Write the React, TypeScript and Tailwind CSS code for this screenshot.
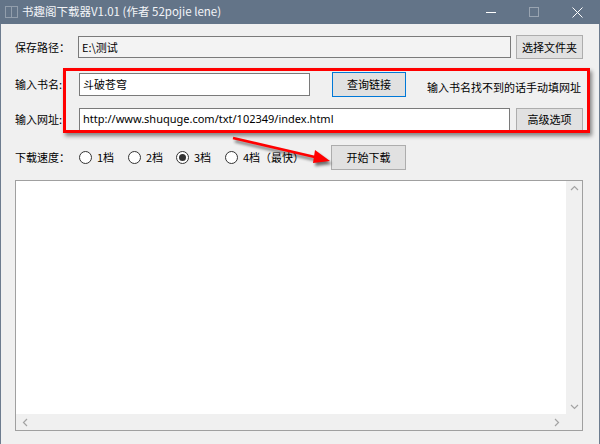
import React from "react";

const font = { fontFamily: '"Noto Sans CJK SC", "Noto Sans", sans-serif' };

function Radio({ checked, label, w }: { checked?: boolean; label: string; w: string }) {
  return (
    <div className={`flex items-center ${w}`}>
      <div className="w-[13px] h-[13px] rounded-full border border-[#333] bg-white flex items-center justify-center">
        {checked && <div className="w-[7px] h-[7px] rounded-full bg-[#333]" />}
      </div>
      <span className="ml-[5px]">{label}</span>
    </div>
  );
}

export default function App() {
  return (
    <div className="relative w-[600px] h-[444px] bg-[#f0f0f0] text-[11px] text-black overflow-hidden" style={font}>
      {/* title bar */}
      <div className="h-[24px] bg-[#637488] flex items-center text-white">
        <div className="ml-[5px] w-[13px] h-[12px] border border-white/30 flex">
          <div className="w-1/2 border-r border-white/30" />
        </div>
        <span className="ml-[4px] text-[11.5px] text-[#f3f5f8]">书趣阁下载器V1.01 (作者 52pojie lene)</span>
        <div className="ml-auto flex items-center h-full">
          <div className="w-[46px] flex justify-center">
            <div className="w-[10px] h-px bg-white" />
          </div>
          <div className="w-[40px] flex justify-center">
            <div className="w-[10px] h-[10px] border border-white/35" />
          </div>
          <div className="w-[46px] flex justify-center">
            <svg width="11" height="11" viewBox="0 0 11 11">
              <path d="M0.5 0.5L10.5 10.5M10.5 0.5L0.5 10.5" stroke="white" strokeWidth="1" />
            </svg>
          </div>
        </div>
      </div>

      <div className="h-[420px] border-l border-r border-[#6d7c8f] pl-[14px] pr-[16px] flex flex-col">
        {/* row 1 */}
        <div className="mt-[11px] h-[24px] flex items-center">
          <div className="w-[63px]">保存路径：</div>
          <div className="w-[433px] h-[22px] border border-[#7a7a7a] bg-[#f3f3f3] flex items-center pl-[3px]">E:\测试</div>
          <div className="ml-[5px] w-[67px] h-[24px] border border-[#adadad] bg-[#e1e1e1] flex items-center justify-center">选择文件夹</div>
        </div>
        {/* row 2 */}
        <div className="mt-[12px] h-[26px] flex items-center">
          <div className="w-[64px]">输入书名:</div>
          <div className="w-[231px] h-[23px] border border-[#7a7a7a] bg-white flex items-center pl-[3px]">斗破苍穹</div>
          <div className="ml-[22px] w-[74px] h-[25px] border border-[#0078d7] bg-[#e1e1e1] flex items-center justify-center">查询链接</div>
          <div className="ml-[21px] mt-[6px]">输入书名找不到的话手动填网址</div>
        </div>
        {/* row 3 */}
        <div className="mt-[10px] h-[25px] flex items-center">
          <div className="w-[64px]">输入网址:</div>
          <div className="w-[431px] h-[23px] border border-[#7a7a7a] bg-white flex items-center pl-[3px] text-[11px]" style={{ fontFamily: '"Noto Sans", sans-serif' }}>http://www.shuquge.com/txt/102349/index.html</div>
          <div className="ml-[6px] w-[67px] h-[24px] border border-[#adadad] bg-[#e1e1e1] flex items-center justify-center">高级选项</div>
        </div>
        {/* row 4 */}
        <div className="mt-[13px] h-[25px] flex items-center">
          <div className="w-[64px]">下载速度：</div>
          <Radio label="1档" w="w-[49px]" />
          <Radio label="2档" w="w-[48px]" />
          <Radio checked label="3档" w="w-[49px]" />
          <Radio label="4档（最快）" w="w-[106px]" />
          <div className="w-[75px] h-[25px] border border-[#adadad] bg-[#e1e1e1] flex items-center justify-center">开始下载</div>
        </div>
        {/* text area */}
        <div className="mt-[10px] h-[251px] w-[568px] border border-[#a0a0a0] bg-white flex flex-col">
          <div className="flex flex-1">
            <div className="flex-1" />
            <div className="w-[16px] bg-[#f0f0f0] flex flex-col items-center justify-between py-[4px]">
              <svg width="9" height="6" viewBox="0 0 9 6"><path d="M1 5L4.5 1.5L8 5" stroke="#a3a3a3" fill="none" strokeWidth="1.2" /></svg>
              <svg width="9" height="6" viewBox="0 0 9 6"><path d="M1 1L4.5 4.5L8 1" stroke="#a3a3a3" fill="none" strokeWidth="1.2" /></svg>
            </div>
          </div>
          <div className="h-[16px] bg-[#f0f0f0] flex items-center">
            <div className="flex-1 flex items-center justify-between px-[6px]">
              <svg width="6" height="9" viewBox="0 0 6 9"><path d="M5 1L1.5 4.5L5 8" stroke="#a3a3a3" fill="none" strokeWidth="1.2" /></svg>
              <svg width="6" height="9" viewBox="0 0 6 9"><path d="M1 1L4.5 4.5L1 8" stroke="#a3a3a3" fill="none" strokeWidth="1.2" /></svg>
            </div>
            <div className="w-[16px]" />
          </div>
        </div>
      </div>

      {/* red annotation box */}
      <div className="absolute left-[63px] top-[68px] w-[527px] h-[65px] border-[3px] border-[#ff0000]" style={{ boxShadow: "2px 3px 4px rgba(0,0,0,0.45)" }} />

      {/* red arrow */}
      <svg className="absolute left-[225px] top-[132px]" width="115" height="40" viewBox="0 0 115 40">
        <defs>
          <filter id="blur" x="-20%" y="-50%" width="140%" height="200%">
            <feGaussianBlur stdDeviation="1.5" />
          </filter>
        </defs>
        <g transform="translate(2,3)" filter="url(#blur)" opacity="0.55">
          <line x1="8" y1="6" x2="94" y2="26" stroke="#000" strokeWidth="2.5" />
          <polygon points="105,29 90,18 88,31" fill="#000" />
        </g>
        <line x1="8" y1="6" x2="94" y2="26" stroke="#ff0000" strokeWidth="2.5" />
        <polygon points="105,29 90,18 88,31" fill="#ff0000" />
      </svg>
    </div>
  );
}
